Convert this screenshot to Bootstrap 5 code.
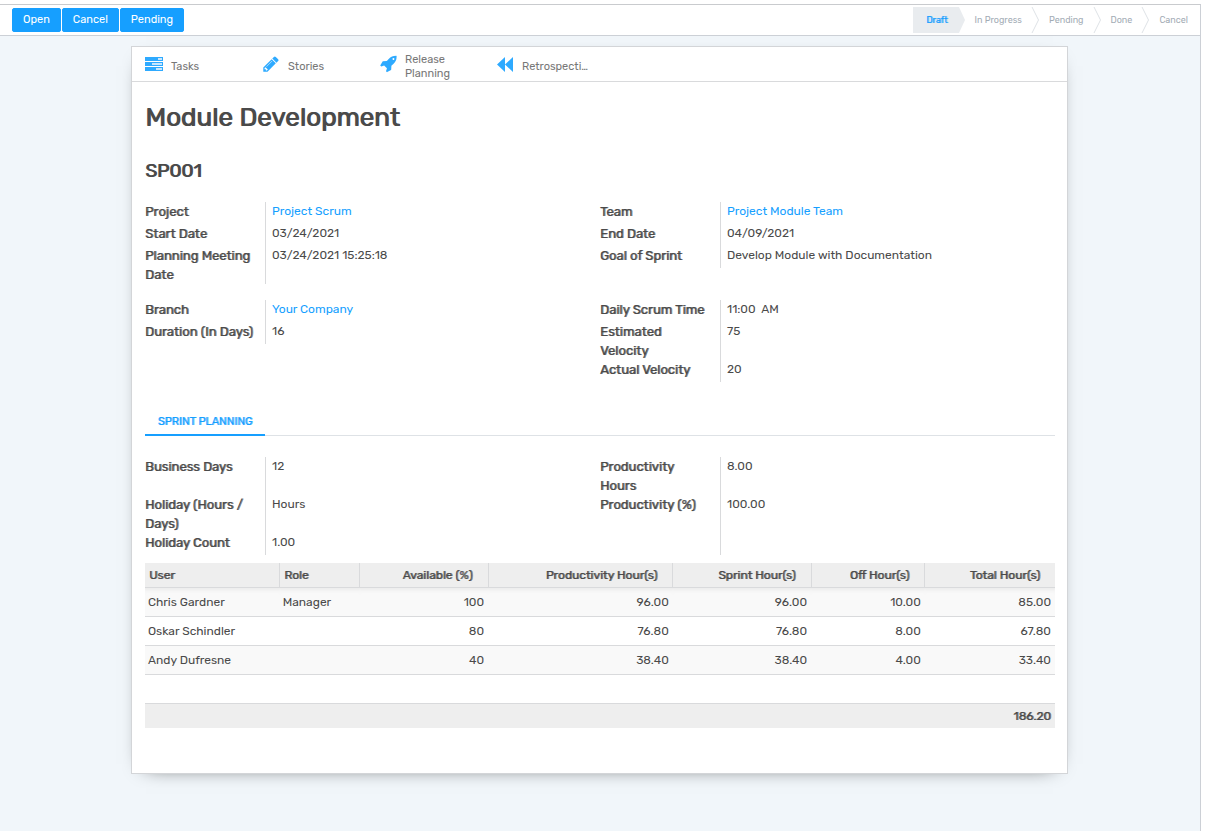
<!DOCTYPE html>
<html lang="en">
<head>
<meta charset="utf-8">
<meta name="viewport" content="width=device-width, initial-scale=1">
<title>Module Development</title>
<link href="https://cdn.jsdelivr.net/npm/bootstrap@5.3.0/dist/css/bootstrap.min.css" rel="stylesheet">
<style>
:root{--accent:#169fff;--ink:#4a4a4a;--line:#d9dadc}
body{font-family:Rubik,Inter,Roboto,sans-serif;font-size:12px;line-height:19px;color:var(--ink);background:#fff}
a{color:var(--accent);text-decoration:none}
.shell{margin:4px 7px 0 0;min-height:calc(100vh - 4px);border-top:1px solid #c9cbce;border-right:1px solid #ccd0d6;background:#f1f6fa}
.control-bar{height:31px;border-bottom:1px solid #ccd0d6;background:#fff;padding-left:12px;gap:1px}
.control-bar .btn{--bs-btn-bg:var(--accent);--bs-btn-border-color:var(--accent);--bs-btn-font-size:11px;--bs-btn-line-height:18px;--bs-btn-padding-x:10px;--bs-btn-padding-y:2px;--bs-btn-border-radius:2px}
.stages{font-size:9px;height:26px;color:#a3acb5}
.stages li{display:flex;align-items:center;padding-left:10px}
.stages li:first-child{background:#e9ecef;color:var(--accent);padding-left:13px}
.stages svg{height:26px;width:8px;margin-left:9px}
.stages li:first-child svg{background:#fff}
.stages li:last-child{padding-right:12px}
/* headings and labels: regular letter widths with thickened strokes */
h1,h2,.fields dt,.hours th,.hours tfoot td,.nav-tabs .nav-link,.stages li:first-child{font-weight:400;text-shadow:1px 0 color-mix(in srgb,currentColor 70%,transparent)}
h1,h2{text-shadow:1px 0 currentColor}
.sheet{margin:10px 132px 58px 131px;border:1px solid #d3d5d8;background:#fff;box-shadow:0 5px 20px -15px #000}
.stat-row{border-bottom:1px solid var(--line);height:35px}
.stat{width:117px;height:34px;padding:0 22px 0 13px;font-size:11px;line-height:14px;color:#777;background:none;border:0;text-align:left}
.stat span{padding-top:5px}
.stat svg{width:18px;height:18px;flex:none;fill:#2eaaff}
.sheet-body{padding:20px 12px 45px 13px}
h1{font-size:26px;line-height:31px;margin:0 0 26px}
h2{font-size:19px;line-height:24px;margin:0 0 19px}
.fields{margin:0;width:50%;display:grid;grid-template-columns:120px 1fr;grid-auto-rows:minmax(22px,auto);align-self:flex-start}
.fields dt{font-size:13px;padding-right:10px}
.fields dd{margin:0;border-left:1px solid var(--line);padding-left:6px;white-space:pre-wrap}
.plan{grid-template-rows:38px 38px 22px}
.nav-tabs{--bs-nav-tabs-border-color:#dee2e6;margin:25px 0 21px}
.nav-tabs .nav-link{border:0;border-bottom:2px solid var(--accent);border-radius:0;width:120px;height:29px;padding:5px 0 0;font-size:11px;text-transform:uppercase}
.nav-tabs .nav-link.active{color:var(--accent);border-color:var(--accent)}
.hours{table-layout:fixed;color:var(--ink);--bs-table-color:var(--ink);--bs-table-striped-color:var(--ink);--bs-table-striped-bg:#f9f9f9;margin:8px 0 0;border-color:var(--line);line-height:20px}
.hours>:not(caption)>*>*{padding:4px 4px 4px 3px}
.hours>thead>tr>th{background:#eee;padding:2px 15px 2px 4px}
.hours>thead>tr>th+th{border-left:1px solid var(--line)}
.hours>tbody>tr:first-child>td{box-shadow:inset 0 5px 5px -4px #e6e6e6,inset 0 0 0 9999px #f9f9f9}
.hours>tfoot>tr>td{background:#eee;padding:2px 4px;border:0}
.hours>tbody{border-top:0!important}
</style>
</head>
<body>
<div class="shell">
  <header class="control-bar d-flex align-items-center">
    <button class="btn btn-primary" type="button">Open</button>
    <button class="btn btn-primary" type="button">Cancel</button>
    <button class="btn btn-primary" type="button">Pending</button>
    <ul class="stages list-unstyled d-flex ms-auto mb-0" aria-label="Stage">
      <li aria-current="step">Draft<svg viewBox="0 0 8 26"><path d="M0 0H2L8 13L2 26H0Z" fill="#e9ecef"/></svg></li>
      <li>In Progress<svg viewBox="0 0 8 26"><path d="M1 0L7.500 13L1 26" fill="none" stroke="#dee2e6"/></svg></li>
      <li>Pending<svg viewBox="0 0 8 26"><path d="M1 0L7.500 13L1 26" fill="none" stroke="#dee2e6"/></svg></li>
      <li>Done<svg viewBox="0 0 8 26"><path d="M1 0L7.500 13L1 26" fill="none" stroke="#dee2e6"/></svg></li>
      <li>Cancel</li>
    </ul>
  </header>
  <main class="sheet">
    <div class="stat-row d-flex">
      <button class="stat d-flex align-items-center gap-2" type="button"><svg viewBox="0 0 18 18"><path d="M0 2H18V6H0ZM0 7H18V11H0ZM0 12H18V16H0Z"/><path fill="#c5e6ff" d="M13 3H17V5H13ZM7 8H17V10H7ZM11 13H17V15H11Z"/></svg><span>Tasks</span></button>
      <button class="stat d-flex align-items-center gap-2" type="button"><svg viewBox="0 0 1792 1792"><path d="M491 1536l91-91-235-235-91 91v107h128v128h107zm523-928q0-22-22-22-10 0-17 7l-542 542q-7 7-7 17 0 22 22 22 10 0 17-7l542-542q7-7 7-17zm-54-192l416 416-832 832h-416v-416zm683 96q0 53-37 90l-166 166-416-416 166-165q36-38 90-38 53 0 91 38l235 234q37 39 37 91z"/></svg><span>Stories</span></button>
      <button class="stat d-flex align-items-center gap-2" type="button"><svg viewBox="-100 44 1800 1800"><path d="M1440 448q0-40-28-68t-68-28-68 28-28 68 28 68 68 28 68-28 28-68zm224-288q0 249-75.500 430.500t-253.500 360.500q-81 80-195 176l-20 379q-2 16-16 26l-384 224q-7 4-16 4-12 0-23-9l-64-64q-13-14-8-32l85-276-281-281-276 85q-3 1-9 1-14 0-23-9l-64-64q-17-19-5-39l224-384q10-14 26-16l379-20q96-114 176-195 188-187 358-258t431-71q14 0 24 9.500t10 22.500z"/></svg><span>Release Planning</span></button>
      <button class="stat d-flex align-items-center gap-2" type="button"><svg viewBox="0 0 18 18"><path d="M9 2V17L1 9.500ZM17 2V17L9 9.500Z"/></svg><span>Retrospecti…</span></button>
    </div>
    <div class="sheet-body">
      <h1>Module Development</h1>
      <h2>SP001</h2>
      <div class="d-flex mb-3">
        <dl class="fields"><dt>Project</dt><dd><a href="#">Project Scrum</a></dd><dt>Start Date</dt><dd>03/24/2021</dd><dt>Planning Meeting Date</dt><dd>03/24/2021 15:25:18</dd></dl>
        <dl class="fields"><dt>Team</dt><dd><a href="#">Project Module Team</a></dd><dt>End Date</dt><dd>04/09/2021</dd><dt>Goal of Sprint</dt><dd>Develop Module with Documentation</dd></dl>
      </div>
      <div class="d-flex">
        <dl class="fields"><dt>Branch</dt><dd><a href="#">Your Company</a></dd><dt>Duration (In Days)</dt><dd>16</dd></dl>
        <dl class="fields"><dt>Daily Scrum Time</dt><dd>11:00  AM</dd><dt>Estimated Velocity</dt><dd>75</dd><dt>Actual Velocity</dt><dd>20</dd></dl>
      </div>
      <ul class="nav nav-tabs"><li class="nav-item"><a class="nav-link active text-center" href="#plan">Sprint Planning</a></li></ul>
      <section id="plan">
        <div class="d-flex">
          <dl class="fields plan"><dt>Business Days</dt><dd>12</dd><dt>Holiday (Hours / Days)</dt><dd>Hours</dd><dt>Holiday Count</dt><dd>1.00</dd></dl>
          <dl class="fields plan"><dt>Productivity Hours</dt><dd>8.00</dd><dt>Productivity (%)</dt><dd>100.00</dd><dt></dt><dd></dd></dl>
        </div>
        <table class="hours table table-striped">
          <colgroup><col style="width:14.800%"><col style="width:8.800%"><col style="width:14.100%"><col style="width:20.300%"><col style="width:15.200%"><col style="width:12.500%"><col style="width:14.300%"></colgroup>
          <thead><tr><th>User</th><th>Role</th><th class="text-end">Available (%)</th><th class="text-end">Productivity Hour(s)</th><th class="text-end">Sprint Hour(s)</th><th class="text-end">Off Hour(s)</th><th class="text-end">Total Hour(s)</th></tr></thead>
          <tbody>
            <tr><td>Chris Gardner</td><td>Manager</td><td class="text-end">100</td><td class="text-end">96.00</td><td class="text-end">96.00</td><td class="text-end">10.00</td><td class="text-end">85.00</td></tr>
            <tr><td>Oskar Schindler</td><td></td><td class="text-end">80</td><td class="text-end">76.80</td><td class="text-end">76.80</td><td class="text-end">8.00</td><td class="text-end">67.80</td></tr>
            <tr><td>Andy Dufresne</td><td></td><td class="text-end">40</td><td class="text-end">38.40</td><td class="text-end">38.40</td><td class="text-end">4.00</td><td class="text-end">33.40</td></tr>
            <tr><td colspan="7">&nbsp;</td></tr>
          </tbody>
          <tfoot><tr><td class="text-end" colspan="7">186.20</td></tr></tfoot>
        </table>
      </section>
    </div>
  </main>
</div>
<script src="https://cdn.jsdelivr.net/npm/bootstrap@5.3.0/dist/js/bootstrap.bundle.min.js"></script>
</body>
</html>
